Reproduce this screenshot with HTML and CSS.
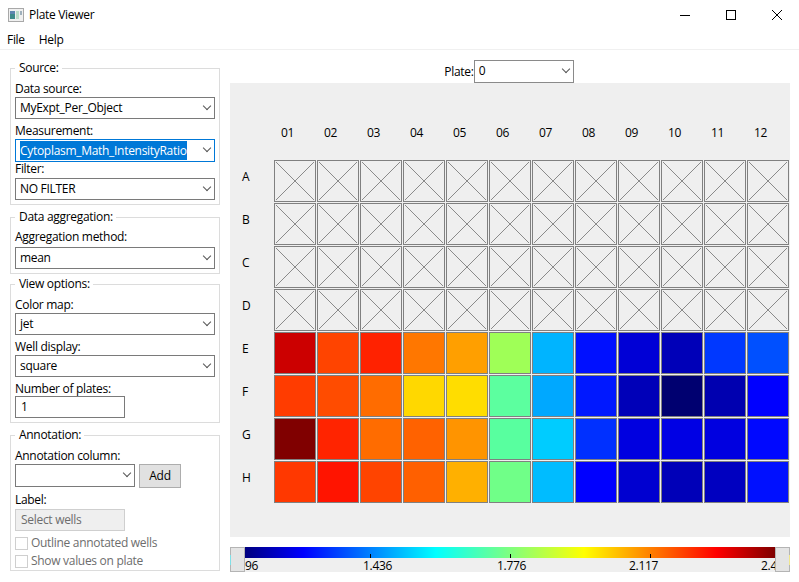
FILE: index.html
```html
<!DOCTYPE html>
<html>
    <head>
        <title>Plate Viewer</title>
        <link rel="stylesheet" href="styles.css">
    </head>
    <body>
        <div class="titlebar">
            <svg class="app-icon" width="16" height="14" viewBox="0 0 16 14">
                <rect x="0.5" y="0.5" width="15" height="13" fill="#f0f0f0" stroke="#a8a8a8" />
                <rect x="2" y="3" width="5" height="8" fill="#3f8a8a" />
                <rect x="2" y="3" width="5" height="3" fill="#5f86b0" />
                <rect x="8" y="3" width="3" height="8" fill="#bcdcc8" />
                <rect x="12" y="3" width="2" height="4" fill="#9fb0bc" />
            </svg>
            <span class="title">Plate Viewer</span>
            <div class="window-buttons">
                <svg width="12" height="12" viewBox="0 0 12 12"><path d="M1 6.5H11" stroke="#000" /></svg>
                <svg width="12" height="12" viewBox="0 0 12 12"><rect x="1.5" y="1.5" width="9" height="9" fill="none" stroke="#000" /></svg>
                <svg width="12" height="12" viewBox="0 0 12 12"><path d="M1 1L11 11M11 1L1 11" stroke="#000" /></svg>
            </div>
        </div>
        <div class="menubar">
            <span>File</span>
            <span>Help</span>
        </div>

        <div class="main">
            <div class="sidebar">
                <fieldset class="group source">
                    <legend>Source:</legend>
                    <label class="label-first">Data source:</label>
                    <div class="select">MyExpt_Per_Object</div>
                    <label>Measurement:</label>
                    <div class="select active"><span class="selected">Cytoplasm_Math_IntensityRatio</span></div>
                    <label class="label-filter">Filter:</label>
                    <div class="select">NO FILTER</div>
                </fieldset>

                <fieldset class="group aggregation">
                    <legend>Data aggregation:</legend>
                    <label class="label-method">Aggregation method:</label>
                    <div class="select">mean</div>
                </fieldset>

                <fieldset class="group view">
                    <legend>View options:</legend>
                    <label class="label-first">Color map:</label>
                    <div class="select">jet</div>
                    <label>Well display:</label>
                    <div class="select">square</div>
                    <label class="label-number">Number of plates:</label>
                    <div class="textbox">1</div>
                </fieldset>

                <fieldset class="group annotation">
                    <legend>Annotation:</legend>
                    <label class="label-first">Annotation column:</label>
                    <div class="row">
                        <div class="select short"></div>
                        <div class="button">Add</div>
                    </div>
                    <label class="label-name">Label:</label>
                    <div class="textbox disabled">Select wells</div>
                    <div class="check first"><i></i>Outline annotated wells</div>
                    <div class="check"><i></i>Show values on plate</div>
                </fieldset>
            </div>

            <div class="content">
                <div class="plate-picker">
                    <span>Plate:</span>
                    <div class="select plate-select">0</div>
                </div>

                <div class="plate">
                    <div class="grid">
                        <span></span>
                        <span class="col">01</span><span class="col">02</span><span class="col">03</span><span class="col">04</span>
                        <span class="col">05</span><span class="col">06</span><span class="col">07</span><span class="col">08</span>
                        <span class="col">09</span><span class="col">10</span><span class="col">11</span><span class="col">12</span>

                        <span class="rowname">A</span>
                        <i class="well empty"></i><i class="well empty"></i><i class="well empty"></i><i class="well empty"></i>
                        <i class="well empty"></i><i class="well empty"></i><i class="well empty"></i><i class="well empty"></i>
                        <i class="well empty"></i><i class="well empty"></i><i class="well empty"></i><i class="well empty"></i>

                        <span class="rowname">B</span>
                        <i class="well empty"></i><i class="well empty"></i><i class="well empty"></i><i class="well empty"></i>
                        <i class="well empty"></i><i class="well empty"></i><i class="well empty"></i><i class="well empty"></i>
                        <i class="well empty"></i><i class="well empty"></i><i class="well empty"></i><i class="well empty"></i>

                        <span class="rowname">C</span>
                        <i class="well empty"></i><i class="well empty"></i><i class="well empty"></i><i class="well empty"></i>
                        <i class="well empty"></i><i class="well empty"></i><i class="well empty"></i><i class="well empty"></i>
                        <i class="well empty"></i><i class="well empty"></i><i class="well empty"></i><i class="well empty"></i>

                        <span class="rowname">D</span>
                        <i class="well empty"></i><i class="well empty"></i><i class="well empty"></i><i class="well empty"></i>
                        <i class="well empty"></i><i class="well empty"></i><i class="well empty"></i><i class="well empty"></i>
                        <i class="well empty"></i><i class="well empty"></i><i class="well empty"></i><i class="well empty"></i>

                        <span class="rowname">E</span>
                        <i class="well" style="background:#cc0000"></i><i class="well" style="background:#ff4400"></i><i class="well" style="background:#ff2200"></i><i class="well" style="background:#ff7700"></i>
                        <i class="well" style="background:#ff9f00"></i><i class="well" style="background:#9fff57"></i><i class="well" style="background:#00b4ff"></i><i class="well" style="background:#0010ff"></i>
                        <i class="well" style="background:#0000d6"></i><i class="well" style="background:#0000b8"></i><i class="well" style="background:#0038ff"></i><i class="well" style="background:#0050ff"></i>

                        <span class="rowname">F</span>
                        <i class="well" style="background:#ff3c00"></i><i class="well" style="background:#ff4c00"></i><i class="well" style="background:#ff6c00"></i><i class="well" style="background:#ffd800"></i>
                        <i class="well" style="background:#ffdd00"></i><i class="well" style="background:#5cff9f"></i><i class="well" style="background:#00a8ff"></i><i class="well" style="background:#0018ff"></i>
                        <i class="well" style="background:#0000b8"></i><i class="well" style="background:#000070"></i><i class="well" style="background:#0000b0"></i><i class="well" style="background:#0000ff"></i>

                        <span class="rowname">G</span>
                        <i class="well" style="background:#800000"></i><i class="well" style="background:#ff2400"></i><i class="well" style="background:#ff6c00"></i><i class="well" style="background:#ff6200"></i>
                        <i class="well" style="background:#ff9400"></i><i class="well" style="background:#58ff9f"></i><i class="well" style="background:#00ccff"></i><i class="well" style="background:#0030ff"></i>
                        <i class="well" style="background:#0000e0"></i><i class="well" style="background:#0000e4"></i><i class="well" style="background:#0000e0"></i><i class="well" style="background:#0008ff"></i>

                        <span class="rowname">H</span>
                        <i class="well" style="background:#ff3800"></i><i class="well" style="background:#ff1400"></i><i class="well" style="background:#ff4400"></i><i class="well" style="background:#ff6000"></i>
                        <i class="well" style="background:#ffb000"></i><i class="well" style="background:#70ff88"></i><i class="well" style="background:#00bcff"></i><i class="well" style="background:#0000ff"></i>
                        <i class="well" style="background:#0000d0"></i><i class="well" style="background:#0000b8"></i><i class="well" style="background:#0000c0"></i><i class="well" style="background:#0010ff"></i>
                    </div>
                </div>

                <div class="colorbar">
                    <div class="handle handle-low"></div>
                    <div class="scale">
                        <div class="gradient">
                            <b class="tick tick-1"></b>
                            <b class="tick tick-2"></b>
                            <b class="tick tick-3"></b>
                        </div>
                        <div class="ticklabels">
                            <span class="val-0">96</span>
                            <span class="val-1">1.436</span>
                            <span class="val-2">1.776</span>
                            <span class="val-3">2.117</span>
                            <span class="val-4">2.4</span>
                        </div>
                    </div>
                    <div class="handle handle-high"></div>
                </div>
            </div>
        </div>
    </body>
</html>
```

FILE: styles.css
```css
body {
    margin: 0;
    width: 799px;
    height: 582px;
    overflow: hidden;
    background-color: white;
    color: #000;
    font-family: "Open Sans", "Noto Sans", sans-serif;
    font-size: 12px;
    letter-spacing: -0.3px;
    line-height: 16px;
}

.titlebar {
    display: flex;
    align-items: center;
    height: 30px;
    padding-left: 8px;
}

.app-icon {
    margin-right: 5px;
}

.title {
    flex: 1;
}

.window-buttons {
    display: flex;
    gap: 34px;
    padding-right: 16px;
}

.menubar {
    display: flex;
    gap: 14px;
    height: 20px;
    padding: 2px 0 0 7px;
    box-sizing: border-box;
    border-bottom: 1px solid #f0f0f0;
}

.main {
    display: flex;
}

.sidebar {
    width: 230px;
    padding: 11px 0 0 10px;
    box-sizing: border-box;
    display: flex;
    flex-direction: column;
    gap: 4px;
}

.group {
    width: 210px;
    box-sizing: border-box;
    margin: 0;
    padding: 0 4px 4px;
    border: 1px solid #dcdcdc;
    min-width: 0;
}

.aggregation {
    margin-top: 1px;
}

.view {
    margin-top: -1px;
}

.annotation {
    margin-top: 1px;
    padding-bottom: 0;
}

.group legend {
    margin-left: 0;
    padding: 0 3px 0 4px;
    line-height: 14px;
}

.group label {
    display: block;
    height: 16px;
    margin-top: 4px;
    line-height: 16px;
}

.group .label-first {
    margin-top: 6px;
}

.group .label-filter {
    margin-top: 0;
    line-height: 14px;
}

.group .label-method {
    height: 18px;
    margin-top: 5px;
}

.group .label-number {
    height: 15px;
}

.group .label-name {
    height: 17px;
}

.select {
    position: relative;
    height: 22px;
    box-sizing: border-box;
    border: 1px solid #7a7a7a;
    padding: 0 4px;
    line-height: 20px;
    background-color: white;
}

.select::after {
    content: "";
    position: absolute;
    right: 4px;
    top: 5px;
    width: 5px;
    height: 5px;
    border-right: 1px solid #555;
    border-bottom: 1px solid #555;
    transform: rotate(45deg);
}

.active {
    height: 23px;
    border-color: #0078d7;
    line-height: 21px;
}

.selected {
    background-color: #0078d7;
    color: white;
    padding: 1px 0;
}

.textbox {
    width: 110px;
    height: 22px;
    box-sizing: border-box;
    border: 1px solid #7a7a7a;
    padding: 0 5px;
    line-height: 20px;
}

.disabled {
    border-color: #cfcfcf;
    background-color: #efefef;
    color: #6d6d6d;
}

.row {
    display: flex;
    gap: 4px;
    height: 24px;
}

.short {
    width: 120px;
    height: 23px;
}

.button {
    width: 42px;
    height: 24px;
    box-sizing: border-box;
    border: 1px solid #adadad;
    background-color: #e1e1e1;
    text-align: center;
    line-height: 22px;
}

.check {
    display: flex;
    align-items: center;
    gap: 3px;
    height: 18px;
    color: #6d6d6d;
}

.check.first {
    margin-top: 3px;
}

.check i {
    width: 13px;
    height: 13px;
    box-sizing: border-box;
    border: 1px solid #cfcfcf;
}

.content {
    width: 560px;
}

.plate-picker {
    display: flex;
    justify-content: center;
    align-items: flex-end;
    height: 33px;
    margin-right: 2px;
}

.plate-picker span {
    line-height: 22px;
}

.plate-select {
    width: 100px;
    height: 23px;
    border-color: #8a8a8a;
}

.plate {
    height: 454px;
    background-color: #efefef;
    padding-top: 34px;
    box-sizing: border-box;
}

.grid {
    display: grid;
    grid-template-columns: 43px repeat(12, 42px);
    grid-template-rows: 42px repeat(8, 42px);
    gap: 1px;
}

.col {
    padding-left: 7px;
    line-height: 32px;
}

.rowname {
    padding-left: 12px;
    line-height: 33px;
}

.well {
    display: block;
    box-sizing: border-box;
    border: 1px solid #808080;
}

.empty {
    padding: 1px;
    background-origin: content-box;
    background-clip: content-box;
    background-image:
        linear-gradient(to top right, transparent calc(50% - 0.6px), #8a8a8a calc(50% - 0.3px), #8a8a8a calc(50% + 0.3px), transparent calc(50% + 0.6px)),
        linear-gradient(to bottom right, transparent calc(50% - 0.6px), #8a8a8a calc(50% - 0.3px), #8a8a8a calc(50% + 0.3px), transparent calc(50% + 0.6px));
}

.colorbar {
    display: flex;
    margin-top: 10px;
}

.handle {
    position: relative;
    width: 15px;
    height: 25px;
    box-sizing: border-box;
    background-color: #e4e4e4;
    border: 1px solid #b4b4b4;
}

.handle::after {
    content: "";
    position: absolute;
    top: 7px;
    width: 1px;
    height: 10px;
}

.handle-low::after {
    left: -1px;
    background-color: #7fe0e8;
}

.handle-high::after {
    right: -1px;
    background-color: #f0e68c;
}

.scale {
    width: 530px;
}

.gradient {
    position: relative;
    height: 11px;
    background-image: linear-gradient(to right, #00007f 0%, #0000ff 11%, #00ffff 36%, #7fff7f 50%, #ffff00 64%, #ff0000 89%, #7f0000 100%);
}

.tick {
    position: absolute;
    bottom: 0;
    width: 1px;
    height: 4px;
    background-color: #000;
}

.tick-1 {
    left: 125px;
}

.tick-2 {
    left: 265px;
}

.tick-3 {
    left: 405px;
}

.ticklabels {
    position: relative;
    height: 14px;
    background-color: #efefef;
    line-height: 16px;
}

.ticklabels span {
    position: absolute;
    top: 0;
}

.val-0 {
    left: 0;
}

.val-1 {
    left: 118px;
}

.val-2 {
    left: 252px;
}

.val-3 {
    left: 384px;
}

.val-4 {
    left: 516px;
}
```
